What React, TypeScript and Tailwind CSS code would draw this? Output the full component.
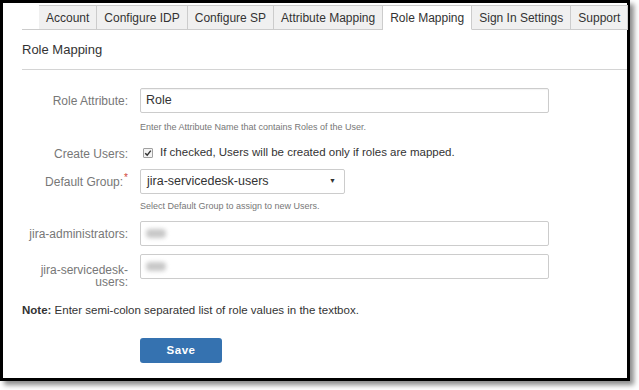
import React from 'react';

const tabs = ['Account', 'Configure IDP', 'Configure SP', 'Attribute Mapping', 'Role Mapping', 'Sign In Settings', 'Support'];

const Blur = () => <div className="ml-[5px] w-[20px] h-[9px] rounded-sm bg-[#c8c8c8] blur-[2px]" />;

export default function App() {
  return (
    <div className="w-[639px] h-[390px] bg-white font-['Liberation_Sans',Arial,sans-serif]">
      <div className="w-[630px] h-[381px] border-[3px] border-black bg-white shadow-[4px_4px_5px_rgba(0,0,0,0.45)] pl-[19px]">
        {/* tabs */}
        <div className="flex pl-[17px] pt-[2px] border-b border-[#cccccc]">
          {tabs.map((t, i) => (
            <div
              key={t}
              className={`shrink-0 whitespace-nowrap h-[25px] -mb-px px-[7px] flex items-center text-[12px] text-[#333] border border-[#cccccc] border-l-0 ${
                i === 0 ? 'border-l' : ''
              } ${t === 'Role Mapping' ? 'bg-white border-b-white' : 'bg-[#f0f0f0]'}`}
            >
              {t}
            </div>
          ))}
        </div>

        <div className="h-[40px] flex items-center text-[13px] text-[#333] border-b border-[#d4d4d4]">Role Mapping</div>

        {/* form */}
        <div className="mt-[18px] text-[12px]">
          <div className="grid grid-cols-[106px_409px] gap-x-[12px] items-center">
            <div className="text-right text-[#777]">Role Attribute:</div>
            <div className="h-[25px] border border-[#cccccc] rounded-[2px] flex items-center px-[5px] text-[12.5px] text-[#333] shadow-[inset_0_1px_1px_rgba(0,0,0,0.05)]">Role</div>
          </div>
          <div className="ml-[118px] mt-[8px] text-[9px] leading-[12px] text-[#777]">Enter the Attribute Name that contains Roles of the User.</div>

          <div className="mt-[10px] grid grid-cols-[106px_409px] gap-x-[12px] items-center h-[16px]">
            <div className="text-right text-[#777] pt-[2px]">Create Users:</div>
            <div className="flex items-center gap-[7px] text-[11.5px] text-[#333] pl-[3px]">
              <div className="w-[10px] h-[10px] border border-[#a0a0a0] bg-[#f4f4f4] rounded-[1px] flex items-center justify-center">
                <svg viewBox="0 0 10 10" className="w-[8px] h-[8px]">
                  <path d="M1.5 5.2 L4 7.6 L8.5 2" fill="none" stroke="#333" strokeWidth="1.8" />
                </svg>
              </div>
              <span>If checked, Users will be created only if roles are mapped.</span>
            </div>
          </div>

          <div className="mt-[10px] grid grid-cols-[106px_409px] gap-x-[12px] items-center">
            <div className="text-right text-[#777]">
              Default Group:<sup className="text-[#d04437] text-[10px] ml-[1px]">*</sup>
            </div>
            <div className="w-[205px] h-[25px] border border-[#cccccc] rounded-[2px] flex items-center justify-between pl-[6px] pr-[8px] text-[12.5px] text-[#333]">
              <span>jira-servicedesk-users</span>
              <span className="text-[7px] text-[#333]">▼</span>
            </div>
          </div>
          <div className="ml-[118px] mt-[6px] text-[9px] leading-[12px] text-[#777]">Select Default Group to assign to new Users.</div>

          <div className="mt-[9px] grid grid-cols-[106px_409px] gap-x-[12px] items-center">
            <div className="text-right text-[#777]">jira-administrators:</div>
            <div className="h-[25px] border border-[#cccccc] rounded-[2px] flex items-center">
              <Blur />
            </div>
          </div>

          <div className="mt-[8px] grid grid-cols-[106px_409px] gap-x-[12px] items-start">
            <div className="text-right text-[#777] leading-[12px] pt-[10px]">jira-servicedesk-users:</div>
            <div className="h-[25px] border border-[#cccccc] rounded-[2px] flex items-center">
              <Blur />
            </div>
          </div>

          <div className="mt-[15px] text-[11.5px] leading-[14px] text-[#333]">
            <b>Note:</b> Enter semi-colon separated list of role values in the textbox.
          </div>

          <div className="ml-[118px] mt-[21px] w-[82px] h-[25px] rounded-[3px] bg-[#3572b0] flex items-center justify-center text-white text-[11.5px] font-bold tracking-[0.5px]">
            Save
          </div>
        </div>
      </div>
    </div>
  );
}
